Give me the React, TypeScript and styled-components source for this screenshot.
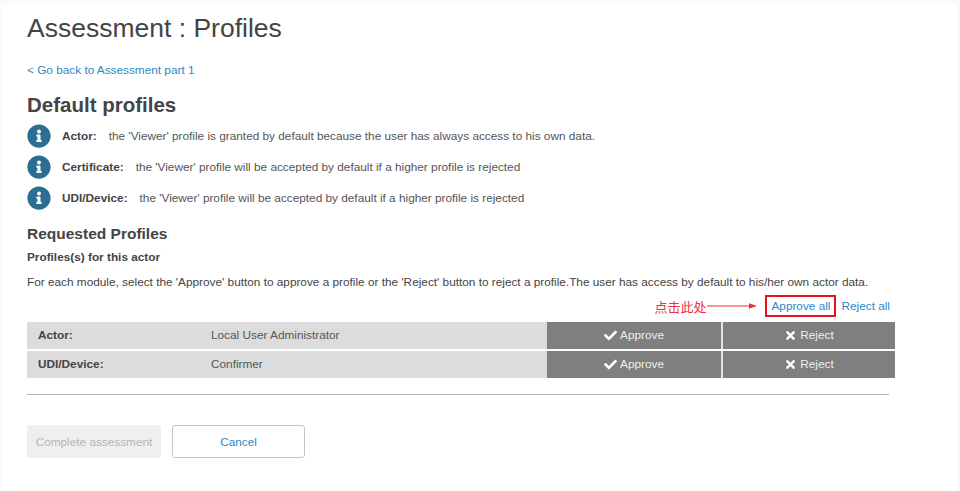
import styled, { createGlobalStyle } from "styled-components";
import { FaCheck, FaInfoCircle, FaTimes } from "react-icons/fa";

const GlobalStyle = createGlobalStyle`
  html, body {
    margin: 0;
    height: 100%;
    background: #f5fbfd;
  }
  body {
    font-family: "Liberation Sans", Arial, sans-serif;
    color: #444;
    overflow: hidden;
  }
`;

const infoRows = [
  {
    label: "Actor:",
    text: "the 'Viewer' profile is granted by default because the user has always access to his own data.",
  },
  {
    label: "Certificate:",
    text: "the 'Viewer' profile will be accepted by default if a higher profile is rejected",
  },
  {
    label: "UDI/Device:",
    text: "the 'Viewer' profile will be accepted by default if a higher profile is rejected",
  },
];

const profiles = [
  { module: "Actor:", profile: "Local User Administrator" },
  { module: "UDI/Device:", profile: "Confirmer" },
];

const App = () => {
  return (
    <Page>
      <GlobalStyle />
      <Title>Assessment : Profiles</Title>
      <BackLink href="#">&lt; Go back to Assessment part 1</BackLink>

      <SectionTitle>Default profiles</SectionTitle>
      <InfoList>
        {infoRows.map((row) => (
          <InfoRow key={row.label}>
            <FaInfoCircle size={24} color="#2a6f92" />
            <InfoLabel>{row.label}</InfoLabel>
            <span>{row.text}</span>
          </InfoRow>
        ))}
      </InfoList>

      <SubTitle>Requested Profiles</SubTitle>
      <SmallTitle>Profiles(s) for this actor</SmallTitle>
      <Description>
        For each module, select the 'Approve' button to approve a profile or the
        'Reject' button to reject a profile.The user has access by default to
        his/her own actor data.
      </Description>

      <BulkActions>
        <Annotation>点击此处</Annotation>
        <svg width="51" height="8" viewBox="0 0 51 8">
          <path d="M0 4H44" stroke="#f0303a" strokeWidth="1.2" />
          <path d="M42 1.2L50 4L42 6.8Z" fill="#f0303a" />
        </svg>
        <ApproveAll href="#">Approve all</ApproveAll>
        <BulkLink href="#">Reject all</BulkLink>
      </BulkActions>

      <Table>
        {profiles.map((row) => (
          <TableRow key={row.module}>
            <ModuleCell>{row.module}</ModuleCell>
            <ProfileCell>{row.profile}</ProfileCell>
            <ActionCell>
              <FaCheck size={13} color="#fff" />
              Approve
            </ActionCell>
            <ActionCell>
              <FaTimes size={13} color="#fff" />
              Reject
            </ActionCell>
          </TableRow>
        ))}
      </Table>

      <Divider />

      <Buttons>
        <CompleteButton disabled>Complete assessment</CompleteButton>
        <CancelButton>Cancel</CancelButton>
      </Buttons>
    </Page>
  );
};

export default App;

const Page = styled.div`
  box-sizing: border-box;
  width: 956px;
  height: 488px;
  margin: 3px 0 0 1px;
  padding: 11px 0 0 26px;
  background: #fff;
`;

const Title = styled.h1`
  margin: 0;
  font-size: 26.5px;
  line-height: 29px;
  font-weight: 400;
  color: #444;
`;

const BackLink = styled.a`
  display: block;
  margin-top: 20px;
  font-size: 11.8px;
  line-height: 14px;
  color: #2f87c6;
  text-decoration: none;
`;

const SectionTitle = styled.h2`
  margin: 16px 0 0;
  font-size: 20.5px;
  line-height: 24px;
  font-weight: 700;
  color: #444;
`;

const InfoList = styled.div`
  display: flex;
  flex-direction: column;
  gap: 7px;
  margin-top: 7px;
`;

const InfoRow = styled.div`
  display: flex;
  align-items: center;
  height: 24px;
  font-size: 11.8px;
  color: #555;
`;

const InfoLabel = styled.strong`
  margin: 0 12px 0 11px;
  color: #444;
`;

const SubTitle = styled.h3`
  margin: 15px 0 0;
  font-size: 15.5px;
  line-height: 18px;
  font-weight: 700;
  color: #444;
`;

const SmallTitle = styled.h4`
  margin: 7px 0 0;
  font-size: 11.8px;
  line-height: 14px;
  font-weight: 700;
  color: #444;
`;

const Description = styled.p`
  margin: 11px 0 0;
  font-size: 11.8px;
  line-height: 14px;
  color: #444;
`;

const BulkActions = styled.div`
  display: flex;
  align-items: center;
  justify-content: flex-end;
  width: 863px;
  height: 22px;
  margin-top: 6px;
  font-size: 11.8px;
`;

const Annotation = styled.span`
  margin-right: 1px;
  font-family: "Noto Sans CJK SC", sans-serif;
  font-size: 13px;
  color: #f0303a;
`;

const BulkLink = styled.a`
  color: #2f87c6;
  text-decoration: none;
`;

const ApproveAll = styled(BulkLink)`
  box-sizing: border-box;
  display: flex;
  align-items: center;
  justify-content: center;
  width: 71px;
  height: 22px;
  margin: 0 5px 0 7px;
  border: 2px solid #e8121c;
`;

const Table = styled.div`
  display: flex;
  flex-direction: column;
  gap: 2px;
  width: 868px;
  margin-top: 5px;
`;

const TableRow = styled.div`
  display: grid;
  grid-template-columns: 184px 336px 174px 174px;
  height: 27px;
  background: #dcdcdc;
  font-size: 11.8px;
  line-height: 27px;
`;

const ModuleCell = styled.strong`
  padding-left: 11px;
  color: #444;
`;

const ProfileCell = styled.span`
  color: #555;
`;

const ActionCell = styled.div`
  display: flex;
  align-items: center;
  justify-content: center;
  gap: 3px;
  background: #7f7f7f;
  color: #eee;
  & + & {
    border-left: 2px solid #e4e4e4;
  }
`;

const Divider = styled.hr`
  width: 862px;
  height: 1px;
  margin: 16px 0 0;
  border: 0;
  background: #b5b5b5;
`;

const Buttons = styled.div`
  display: flex;
  gap: 11px;
  margin-top: 30px;
`;

const CompleteButton = styled.button`
  width: 134px;
  height: 33px;
  padding: 0;
  border: 0;
  border-radius: 3px;
  background: #efefef;
  font-family: inherit;
  font-size: 11.8px;
  color: #b4b4b4;
`;

const CancelButton = styled.button`
  width: 133px;
  height: 33px;
  padding: 0;
  border: 1px solid #c4c4c4;
  border-radius: 3px;
  background: #fff;
  font-family: inherit;
  font-size: 11.8px;
  color: #2f87c6;
`;
